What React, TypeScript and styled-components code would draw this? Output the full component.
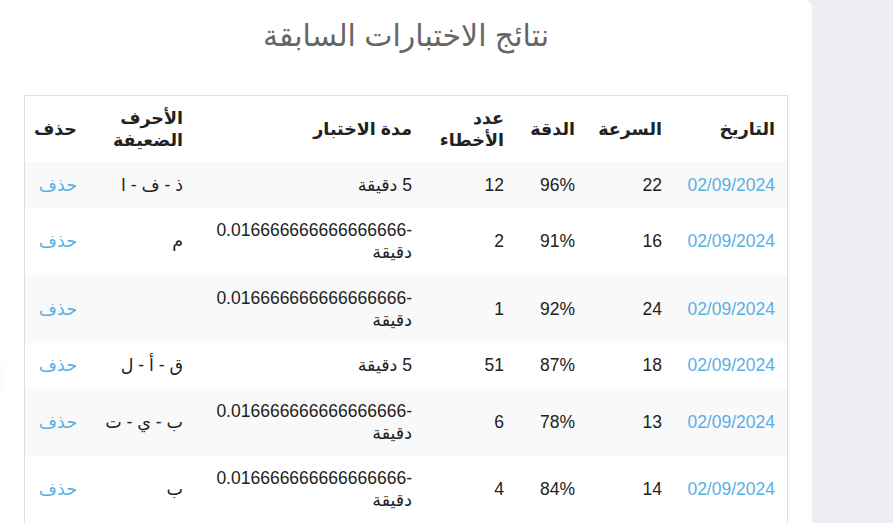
import React from 'react';
import styled, { createGlobalStyle } from 'styled-components';

const Global = createGlobalStyle`
  html, body { margin: 0; padding: 0; background: #eceef2; }
  body {
    font-family: "Liberation Sans", "DejaVu Sans", sans-serif;
    font-size: 17.5px;
    line-height: 22px;
    color: #333;
  }
`;

const Page = styled.div`
  position: relative;
  display: flex;
  height: 523px;
  overflow: hidden;
`;

const Panel = styled.main`
  width: 812px;
  box-sizing: border-box;
  background: #fff;
  border-top-right-radius: 8px;
  padding: 19px 24px 40px;
  direction: rtl;
`;

const Title = styled.h2`
  margin: 0 0 43px;
  text-align: center;
  font-weight: 400;
  font-size: 30px;
  line-height: 33px;
  color: #666;
`;

const Table = styled.table`
  width: 764px;
  table-layout: fixed;
  border-collapse: separate;
  border-spacing: 0;
  border: 1px solid #ddd;
`;

const HeadCell = styled.th`
  padding: 11px 12px;
  text-align: right;
  vertical-align: middle;
  font-weight: 700;
  color: #222;
`;

const Row = styled.tr<{ $striped: boolean }>`
  background: ${(p) => (p.$striped ? '#f9f9f9' : '#fff')};
`;

const Cell = styled.td`
  padding: 11.75px 12px;
  text-align: right;
  vertical-align: middle;
  color: #222;
`;

const Link = styled.a`
  color: #5aafe2;
  text-decoration: none;
  cursor: pointer;
`;

const Ghost = styled.div`
  position: absolute;
  left: -6px;
  top: 366px;
  font-family: "DejaVu Sans", sans-serif;
  font-size: 26px;
  line-height: 30px;
  color: rgba(255, 255, 255, 0.9);
  text-shadow: 0 0 6px rgba(120, 190, 240, 0.7);
  opacity: 0.35;
  pointer-events: none;
`;

type Result = {
  date: string;
  speed: number;
  accuracy: number;
  errors: number;
  duration: string;
  weak: string;
};

const small = String(-1 / 60);

const results: Result[] = [
  { date: '02/09/2024', speed: 22, accuracy: 96, errors: 12, duration: '5', weak: 'ذ - ف - ا' },
  { date: '02/09/2024', speed: 16, accuracy: 91, errors: 2, duration: small, weak: 'م' },
  { date: '02/09/2024', speed: 24, accuracy: 92, errors: 1, duration: small, weak: '' },
  { date: '02/09/2024', speed: 18, accuracy: 87, errors: 51, duration: '5', weak: 'ق - أ - ل' },
  { date: '02/09/2024', speed: 13, accuracy: 78, errors: 6, duration: small, weak: 'ب - ي - ت' },
  { date: '02/09/2024', speed: 14, accuracy: 84, errors: 4, duration: small, weak: 'ب' },
];

const columns = [
  { label: 'التاريخ', width: 113 },
  { label: 'السرعة', width: 87 },
  { label: 'الدقة', width: 71 },
  { label: 'عدد الأخطاء', width: 92 },
  { label: 'مدة الاختبار', width: 229 },
  { label: 'الأحرف الضعيفة', width: 106 },
  { label: 'حذف', width: 64 },
];

export default function App() {
  return (
    <>
      <Global />
      <Page>
        <Panel>
          <Title>نتائج الاختبارات السابقة</Title>
          <Table>
            <colgroup>
              {columns.map((c) => (
                <col key={c.label} style={{ width: c.width }} />
              ))}
            </colgroup>
            <thead>
              <tr>
                {columns.map((c) => (
                  <HeadCell key={c.label}>{c.label}</HeadCell>
                ))}
              </tr>
            </thead>
            <tbody>
              {results.map((r, i) => (
                <Row key={i} $striped={i % 2 === 0}>
                  <Cell>
                    <Link>{r.date}</Link>
                  </Cell>
                  <Cell>{r.speed}</Cell>
                  <Cell>{r.accuracy}%</Cell>
                  <Cell>{r.errors}</Cell>
                  <Cell>{r.duration} دقيقة</Cell>
                  <Cell>{r.weak}</Cell>
                  <Cell>
                    <Link>حذف</Link>
                  </Cell>
                </Row>
              ))}
            </tbody>
          </Table>
        </Panel>
        <Ghost>أ</Ghost>
      </Page>
    </>
  );
}
